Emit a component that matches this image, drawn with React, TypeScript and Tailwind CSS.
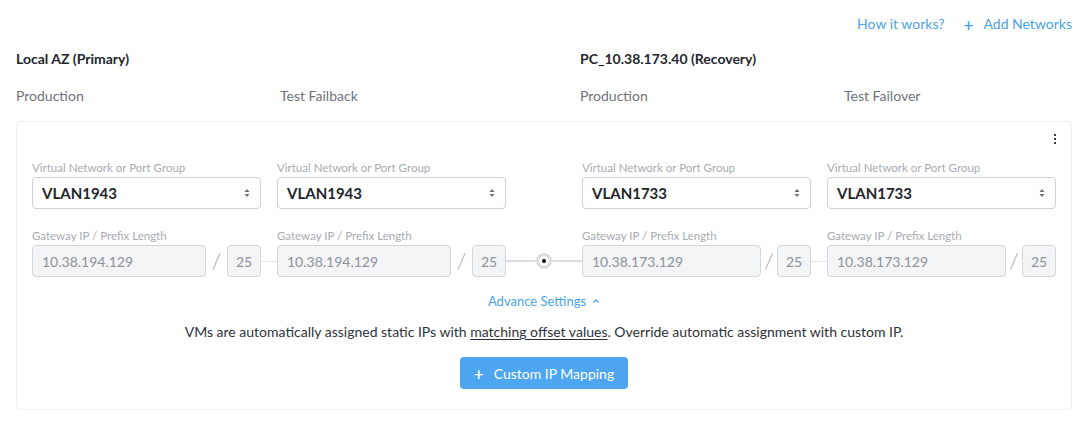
import * as React from "react";

const COL = "w-[229px] shrink-0";

function SelectBox({ value }: { value: string }) {
  return (
    <div className={COL}>
      <div className="text-[11.5px] leading-[14px] text-[#a7abb2] mb-[2px]">
        Virtual Network or Port Group
      </div>
      <div className="h-[32px] flex items-center justify-between rounded-[4px] border border-[#cdd1d7] bg-white pl-[9px] pr-[10px]">
        <span className="text-[15px] font-bold text-[#22262b]">{value}</span>
        <svg width="6" height="10" viewBox="0 0 6 10" className="text-[#6b7078]">
          <path d="M3 1 L5.5 4 H0.5 Z" fill="currentColor" />
          <path d="M3 9 L5.5 6 H0.5 Z" fill="currentColor" />
        </svg>
      </div>
    </div>
  );
}

function Gateway({ ip, prefix, wide }: { ip: string; prefix: string; wide?: boolean }) {
  return (
    <div className={COL}>
      <div className="text-[11.5px] leading-[14px] text-[#a7abb2] mb-[2px]">
        Gateway IP / Prefix Length
      </div>
      <div className="flex items-center">
        <div
          className={
            (wide ? "w-[179px] " : "w-[174px] ") +
            "h-[32px] flex items-center rounded-[4px] border border-[#d3d6db] bg-[#f3f4f6] pl-[9px] text-[14px] text-[#8d9299]"
          }
        >
          {ip}
        </div>
        <div className="flex-1 text-center text-[22px] font-light leading-none text-[#9ca0a7]">
          /
        </div>
        <div className="h-[32px] w-[34px] flex items-center justify-center rounded-[4px] border border-[#d3d6db] bg-[#f3f4f6] text-[14px] text-[#8d9299]">
          {prefix}
        </div>
      </div>
    </div>
  );
}

function Link() {
  return (
    <div className="w-[16px] shrink-0 self-end h-[32px] flex items-center">
      <div className="h-px w-full bg-[#e3e5e8]" />
    </div>
  );
}

function Hub() {
  return (
    <div className="w-[76px] shrink-0 self-end h-[32px] flex items-center">
      <div className="h-[2px] flex-1 bg-[#d9dce0]" />
      <div className="h-[16px] w-[16px] rounded-full border-[3px] border-[#dadde1] bg-white flex items-center justify-center">
        <div className="h-[4px] w-[4px] rounded-full bg-black" />
      </div>
      <div className="h-[2px] flex-1 bg-[#d9dce0]" />
    </div>
  );
}

export default function App() {
  return (
    <div
      className="w-[1086px] h-[424px] bg-white pl-4 pr-[14px] overflow-hidden"
      style={{ fontFamily: "Lato, 'Liberation Sans', sans-serif" }}
    >
      <div className="pt-[14px] flex justify-end items-center gap-[19px] text-[14px] leading-[20px] text-[#4aa3e8]">
        <span>How it works?</span>
        <span className="flex items-center gap-[10px]">
          <span className="text-[17px] font-semibold leading-none">+</span>
          Add Networks
        </span>
      </div>

      <div className="mt-[15px] flex text-[14px] leading-[20px] font-bold text-[#23272d]">
        <div className="w-[564px]">Local AZ (Primary)</div>
        <div>PC_10.38.173.40 (Recovery)</div>
      </div>

      <div className="mt-[17px] flex text-[14px] leading-[20px] text-[#6d737b]">
        <div className="w-[264px]">Production</div>
        <div className="w-[300px]">Test Failback</div>
        <div className="w-[264px]">Production</div>
        <div>Test Failover</div>
      </div>

      <div className="relative mt-[15px] w-[1056px] rounded-[4px] border border-[#eeeff1] pt-[39px] pb-[20px] px-[15px]">
        <div className="absolute top-[12px] right-[15px] flex flex-col gap-[2px]">
          <span className="h-[2px] w-[2px] bg-[#3a3d42]" />
          <span className="h-[2px] w-[2px] bg-[#3a3d42]" />
          <span className="h-[2px] w-[2px] bg-[#3a3d42]" />
        </div>

        <div className="flex">
          <SelectBox value="VLAN1943" />
          <div className="w-[16px] shrink-0" />
          <SelectBox value="VLAN1943" />
          <div className="w-[76px] shrink-0" />
          <SelectBox value="VLAN1733" />
          <div className="w-[16px] shrink-0" />
          <SelectBox value="VLAN1733" />
        </div>

        <div className="mt-[20px] flex">
          <Gateway ip="10.38.194.129" prefix="25" />
          <Link />
          <Gateway ip="10.38.194.129" prefix="25" />
          <Hub />
          <Gateway ip="10.38.173.129" prefix="25" wide />
          <Link />
          <Gateway ip="10.38.173.129" prefix="25" wide />
        </div>

        <div className="mt-[15px] flex justify-center items-center gap-[6px] text-[13px] leading-[18px] text-[#4aa3e8]">
          Advance Settings
          <svg width="8" height="6" viewBox="0 0 8 6">
            <path d="M1.5 4.5 L4 2 L6.5 4.5" fill="none" stroke="currentColor" strokeWidth="1.4" />
          </svg>
        </div>

        <div className="mt-[12px] text-center text-[14px] leading-[20px] text-[#2e3238]">
          VMs are automatically assigned static IPs with{" "}
          <span className="underline underline-offset-2">matching offset values</span>. Override automatic
          assignment with custom IP.
        </div>

        <div className="mt-[15px] flex justify-center">
          <button className="h-[32px] w-[168px] flex items-center justify-center gap-[10px] rounded-[4px] bg-[#4ea5f0] text-[14px] text-white">
            <span className="text-[17px] font-semibold leading-none">+</span>
            Custom IP Mapping
          </button>
        </div>
      </div>
    </div>
  );
}
